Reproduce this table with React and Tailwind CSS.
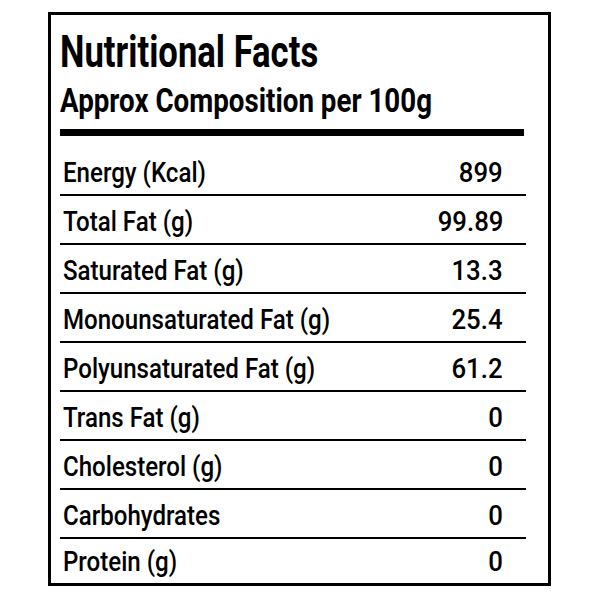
import React from "react";

const rows = [
  ["Energy (Kcal)", "899"],
  ["Total Fat (g)", "99.89"],
  ["Saturated Fat (g)", "13.3"],
  ["Monounsaturated Fat (g)", "25.4"],
  ["Polyunsaturated Fat (g)", "61.2"],
  ["Trans Fat (g)", "0"],
  ["Cholesterol (g)", "0"],
  ["Carbohydrates", "0"],
  ["Protein (g)", "0"],
];

export default function App() {
  return (
    <div
      className="w-[600px] h-[600px] bg-white pt-[12px] pl-[48px] text-black"
      style={{ fontFamily: "Roboto, 'Noto Sans', sans-serif" }}
    >
      <div className="w-[503px] h-[574px] border-[3px] border-black pl-[9px] pr-[22px] flex flex-col">
        <div className="mt-[14px] h-[45px] text-[45px] leading-[45px] font-bold whitespace-nowrap">
          <span className="inline-block origin-left scale-x-[0.77]">Nutritional Facts</span>
        </div>
        <div className="mt-[10px] h-[33px] text-[33px] leading-[33px] font-bold whitespace-nowrap">
          <span className="inline-block origin-left scale-x-[0.84]">Approx Composition per 100g</span>
        </div>
        <div className="mt-[12px] h-[7px] w-[464px] bg-black" />
        {rows.map(([label, value], i) => {
          const first = i === 0;
          const last = i === rows.length - 1;
          return (
            <div
              key={label}
              className={
                "flex items-end justify-between pl-[3px] pr-[23px] text-[28px] leading-[28px] font-medium whitespace-nowrap " +
                (first
                  ? "h-[60px] pb-[7px] border-b-2 border-black"
                  : last
                  ? "h-[44px] pb-[7px]"
                  : "h-[49px] pb-[7px] border-b-2 border-black")
              }
            >
              <span className="inline-block origin-left scale-x-[0.86]">{label}</span>
              <span className="inline-block origin-right scale-x-[0.92]">{value}</span>
            </div>
          );
        })}
      </div>
    </div>
  );
}
